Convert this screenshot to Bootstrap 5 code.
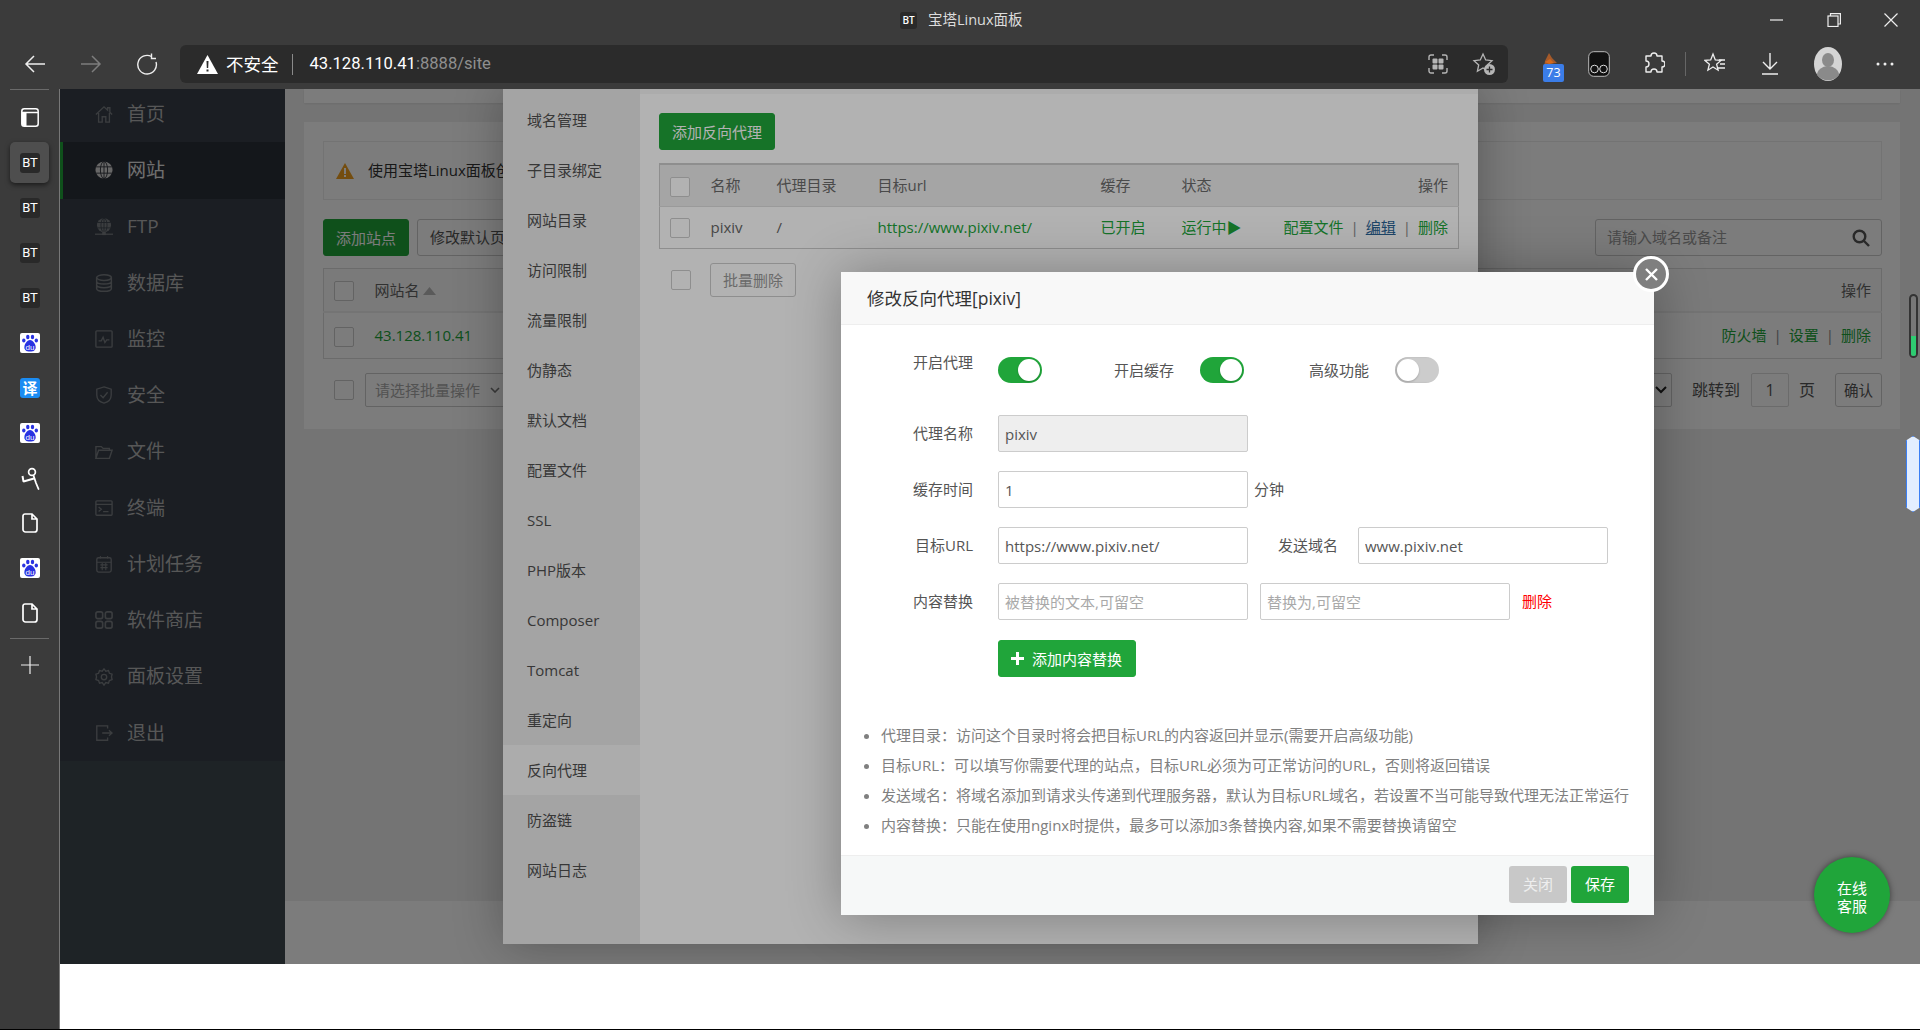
<!DOCTYPE html>
<html lang="zh-CN">
<head>
<meta charset="utf-8">
<title>宝塔Linux面板</title>
<link href="https://cdn.jsdelivr.net/npm/bootstrap@5.3.0/dist/css/bootstrap.min.css" rel="stylesheet">
<style>
html,body{height:100%;margin:0;overflow:hidden;background:#000;}
body{font-family:"Open Sans","Noto Sans CJK SC",sans-serif;font-size:15px;color:#555;}
.shell{height:1029px;display:flex;flex-direction:column;overflow:hidden;background:#3b3b3b;}
/* browser chrome */
.titlebar{height:45px;flex:none;color:#ddd;font-size:14.5px;padding-bottom:5px;}
.bt-mini{width:17px;height:17px;background:#2a2a2a;color:#fff;font-size:10px;font-weight:600;border-radius:3px;line-height:17px;text-align:center;}
.titlebar .center-title{padding-left:900px;gap:11px;flex:1;}
.winbtns{gap:43px;padding-right:22px;}
.toolbar{height:44px;flex:none;padding-left:24px;padding-bottom:6px;}
.navs{gap:34px;width:156px;}
.addr{width:1328px;height:38px;background:#2b2b2b;border-radius:6px;padding:0 12px 0 17px;font-size:17.5px;color:#fff;}
.addr .sep{width:1px;height:21px;background:#8a8a8a;margin:0 15px 0 13px;}
.addr .urltxt{font-family:Roboto,"Noto Sans CJK SC",sans-serif;font-size:16.6px;padding-left:2px;}
.addr .dim{color:#8f8f8f;}
.tools{flex:1;padding-left:34px;}
.ext-fire{position:relative;width:20px;height:32px;flex:none;}
.ext-badge{position:absolute;left:1px;bottom:-2px;width:21px;height:18px;background:#3b7de8;color:#fff;font-size:12.5px;line-height:18px;text-align:center;border-radius:2px;}
.t-glass{margin-left:26px;}
.t-puzzle{margin-left:33px;}
.vline{width:1px;height:24px;background:#666;margin-left:20px;}
.t-fav{margin-left:18px;}
.t-dl{margin-left:35px;}
.t-ava{margin-left:35px;}
.t-dots{margin-left:34px;}
.mainrow{flex:1;display:flex;min-height:0;}
/* rail */
.rail{width:59px;flex:none;background:#3b3b3b;}
.rail-top{height:1px;background:#6a6a6a;margin:0 10px 5px 10px;}
.rail-item{height:45px;width:59px;display:flex;align-items:center;justify-content:center;position:relative;padding-left:1px;}
.rail-on::before{content:"";position:absolute;left:10px;top:2px;width:39px;height:41px;background:#4e4e4e;border-radius:5px;box-shadow:0 2px 5px rgba(0,0,0,.55);}
.rail-bt{position:relative;width:20px;height:20px;background:#292929;border-radius:3px;color:#fff;font-family:Roboto,sans-serif;font-size:13px;line-height:20px;text-align:center;font-weight:400;}
.rail-fy{width:20px;height:20px;background:#1b8cf2;border-radius:3px;color:#fff;font-size:15px;line-height:20px;text-align:center;font-weight:700;}
.rail-sep{height:1px;background:#6a6a6a;margin:3px 10px 3px 10px;}
/* page */
.pageview{flex:1;min-width:0;border-left:1px solid #777;position:relative;background:#fff;display:flex;flex-direction:column;}
.appview{height:875px;flex:none;display:flex;overflow:hidden;}
.sidenav{width:225px;flex:none;background:#3e4a50;}
.sidenav-list{background:#383f49;margin-top:-3px;}
.nav-row{height:56.25px;display:flex;align-items:center;padding-left:35px;gap:14px;color:#b4b4b4;font-size:19px;}
.nav-row svg{width:18px;height:18px;flex:none;color:#7a7e83;}
.nav-row.active{background:#2c3038;border-left:3px solid #20a53a;padding-left:32px;color:#e6e6e6;}
.nav-row.active svg{color:#d4d4d4;}
.mainwrap{flex:1;min-width:0;display:flex;flex-direction:column;background:#fff;}
.mainarea{height:812px;flex:none;background:#f0f0f0;padding:0 20px 0 19px;overflow:hidden;}
.topcard{height:14px;background:#fff;margin-bottom:19px;box-shadow:0 1px 2px rgba(0,0,0,.08);}
.sitecard{height:307px;background:#fff;padding:19px 18px 0 19px;}
.notice{height:59px;border:1px solid #ececec;padding-left:12px;gap:14px;color:#333;white-space:nowrap;overflow:hidden;margin-bottom:19px;}
.btn-bt{background:#20a53a;border:1px solid #20a53a;color:#fff;font-size:15px;height:37px;padding:0 12px;border-radius:3px;line-height:36px;}
.btn-pale{background:#fff;border:1px solid #ccc;color:#555;font-size:15px;height:37px;padding:0 12px;border-radius:3px;line-height:35px;}
.searchbox{width:287px;height:37px;border:1px solid #ccc;border-radius:3px;padding:0 11px;color:#999;}
.cbx{display:inline-block;width:20px;height:20px;border:1px solid #ccc;border-radius:2px;background:#fff;vertical-align:middle;}
.site-tbl{width:100%;table-layout:fixed;border-collapse:collapse;border:1px solid #ddd;margin:12px 0 14px;color:#666;}
.site-tbl th{height:43px;background:#fbfbfb;border-bottom:2px solid #eee;font-weight:400;padding:0 10px;vertical-align:middle;}
.site-tbl td{height:47px;padding:0 10px;vertical-align:middle;}
.grn{color:#20a53a;}
.lnk-sep{color:#888;margin:0 7px;}
.pagerow{height:34px;color:#555;padding-left:11px;}
.sel-fake{height:34px;border:1px solid #ccc;border-radius:2px;color:#aaa;padding:0 9px;background:#fff;}
.sel-batch{width:145px;margin-left:11px;justify-content:space-between;white-space:nowrap;font-size:15px;}
.sel-size{width:90px;padding-right:4px;margin-left:auto;justify-content:flex-end;}
.pg-txt{font-size:16px;margin-left:20px;}
.pginput{width:38px;height:34px;border:1px solid #ddd;border-radius:2px;text-align:center;line-height:32px;color:#555;margin-left:11px;font-size:16px;}
.pg-unit{font-size:16px;margin-left:10px;margin-right:20px;}
.btn-pg{height:34px;width:47px;padding:0;justify-content:center;font-size:14.5px;}
.footbar{flex:1;background:#fff;}
/* layers */
.shade{position:absolute;left:0;top:0;right:0;height:875px;background:rgba(0,0,0,.3);overflow:hidden;}
.layer-site{position:absolute;left:443px;top:-1px;width:975px;height:856px;background:#f6f6f6;box-shadow:1px 1px 50px rgba(0,0,0,.3);display:flex;border-radius:0 0 2px 2px;}
.site-menu{width:137px;flex:none;background:#ebebeb;padding-top:7px;}
.site-menu-item{height:50px;line-height:50px;padding-left:24px;font-size:15px;color:#505050;}
.site-menu-item.active{background:#f6f6f6;}
.site-pane{flex:1;background:#fff;margin-top:6px;padding:19px 16px 0 19px;}
.btn-addrp{margin-bottom:13px;}
.proxy-tbl{width:800px;table-layout:fixed;border-collapse:collapse;border:1px solid #ccc;border-top:2px solid #ccc;color:#666;}
.proxy-tbl th{height:42px;background:#ececec;font-weight:400;padding:0 10px;border-bottom:1px solid #ddd;color:#6a6a6a;}
.proxy-tbl td{height:42px;padding:0 10px;}
.batch-row{margin-top:14px;padding-left:8px;}
.btn-off{height:34px;padding:0 12px;font-size:15px;border:1px solid #ccc;border-radius:3px;color:#999;line-height:32px;background:#fff;margin-left:19px;}
.dlg{position:absolute;left:781px;top:183px;width:813px;height:643px;background:#fff;box-shadow:1px 1px 50px rgba(0,0,0,.3);display:flex;flex-direction:column;}
.dlg-head{height:53px;flex:none;background:#f8f8f8;border-bottom:1px solid #eee;padding-left:26px;font-size:17.5px;line-height:52px;color:#333;}
.dlg-close{position:absolute;right:-15px;top:-16px;width:36px;height:36px;border-radius:50%;background:#7f7f7f;border:3px solid #fff;display:flex;align-items:center;justify-content:center;}
.dlg-body{flex:1;padding-top:32px;color:#555;}
.fm-row{display:flex;align-items:center;height:37px;margin-bottom:19px;}
.fm-row.fm-gap{margin-bottom:20px;}
.fm-lab{width:132px;text-align:right;margin-right:25px;flex:none;}
.fm-ctl{width:250px;height:37px;font-size:15px;border:1px solid #ccc;border-radius:2px;padding:0 6px;color:#555;font-family:inherit;box-shadow:none;flex:none;}
.fm-ctl::placeholder{color:#a9a9a9;}
.fm-ctl:disabled{background:#eee;}
.tgl{width:44px;height:26px;border-radius:13px;padding:2px;display:flex;flex:none;}
.tgl.on{background:#20a53a;justify-content:flex-end;}
.tgl.off{background:#ccc;box-shadow:inset 2px 0 2px rgba(0,0,0,.12);}
.tgl i{display:block;width:22px;height:22px;border-radius:50%;background:#fff;box-shadow:0 1px 2px rgba(0,0,0,.2);}
.tgl-row{height:26px;margin-bottom:32px;display:flex;align-items:center;}
.lab-a{margin:0 26px 0 72px;}
.lab-b{margin:0 26px 0 65px;}
.lab-c{width:90px;text-align:right;margin-right:20px;}
.fm-unit{margin-left:6px;}
.fm-del{margin-left:12px;color:#f00;}
.fm-second{margin-left:12px;}
.btn-addrule{width:138px;height:37px;}
.tips{margin:43px 0 0;padding-left:40px;color:#808080;font-size:15px;list-style:disc;}
.tips li{height:30px;line-height:30px;white-space:nowrap;}
.dlg-foot{height:60px;flex:none;background:#f6f8f8;border-top:1px solid #eee;padding:10px 25px 0 0;gap:4px;}
.btn-g{width:58px;height:37px;padding:0;font-size:15px;border:0;border-radius:3px;line-height:37px;text-align:center;}
.btn-close2{background:#c8c8c8;color:#eee;}
.btn-save{background:#20a53a;color:#fff;}
.chat-bub{position:absolute;left:1754px;top:768px;width:76px;height:76px;border-radius:50%;background:#20a53a;color:#fff;font-size:15px;line-height:18px;text-align:center;display:flex;align-items:center;justify-content:center;padding-top:3px;box-shadow:0 0 6px rgba(0,0,0,.5);}
.edge-gauge{position:absolute;right:2px;top:205px;width:9px;height:64px;border:2px solid #333;background:#777;border-radius:5px;overflow:hidden;}
.edge-gauge i{display:block;margin-top:40px;height:24px;background:#2ecc71;}
.edge-pill{position:absolute;right:0;top:347px;width:14px;height:76px;background:#e3eeff;border:1.5px solid #3b7ff5;clip-path:polygon(50% 0,100% 6%,100% 94%,50% 100%,0 94%,0 6%);}
.tri-sort{margin-left:3px;vertical-align:1px;}
</style>
</head>
<body>
<div class="shell">
  <div class="titlebar d-flex">
    <div class="center-title d-flex align-items-center"><span class="bt-mini">BT</span><span>宝塔Linux面板</span></div>
    <div class="winbtns d-flex align-items-center">
      <svg width="14" height="14" viewBox="0 0 14 14"><path d="M0 7h13" stroke="#eee" stroke-width="1.2"/></svg>
      <svg width="14" height="14" viewBox="0 0 14 14" fill="none" stroke="#eee" stroke-width="1.2"><rect x="1" y="3" width="10" height="10.5"/><path d="M3.5 3V.7H13.4V11H11"/></svg>
      <svg width="14" height="14" viewBox="0 0 14 14"><path d="M.5.5l13 13M13.500.5l-13 13" stroke="#eee" stroke-width="1.2"/></svg>
    </div>
  </div>
  <div class="toolbar d-flex align-items-center">
    <div class="navs d-flex align-items-center">
      <svg width="22" height="22" viewBox="0 0 22 22" fill="none" stroke="#eee" stroke-width="1.5"><path d="M21 11H2M10 3l-8 8 8 8"/></svg>
      <svg width="22" height="22" viewBox="0 0 22 22" fill="none" stroke="#7d7d7d" stroke-width="1.5"><path d="M1 11h19M12 3l8 8-8 8"/></svg>
      <svg width="22" height="22" viewBox="0 0 22 22" fill="none" stroke="#eee" stroke-width="1.4"><path d="M15.500 3.500A9.300 9.300 0 1 0 20 9"/><path d="M15.500.5v5h4.500"/></svg>
    </div>
    <div class="addr d-flex align-items-center">
      <svg width="21" height="19" viewBox="0 0 21 19" class="me-2"><path d="M10.500 0 21 19H0z" fill="#fff"/><path d="M9.500 6h2l-.3 7h-1.400zM9.500 14.500h2v2h-2z" fill="#2b2b2b"/></svg>
      <span>不安全</span><span class="sep"></span><span class="urltxt">43.128.110.41<span class="dim">:8888/site</span></span>
      <div class="ms-auto d-flex align-items-center gap-4">
        <svg width="20" height="20" viewBox="0 0 20 20" fill="none" stroke="#b5b5b5" stroke-width="1.4"><path d="M1 6V3a2 2 0 0 1 2-2h3M14 1h3a2 2 0 0 1 2 2v3M19 14v3a2 2 0 0 1-2 2h-3M6 19H3a2 2 0 0 1-2-2v-3"/><g fill="#b5b5b5" stroke="none"><rect x="4.500" y="4.500" width="5" height="5" rx="1"/><rect x="10.500" y="4.500" width="5" height="5" rx="1"/><rect x="4.500" y="10.500" width="5" height="5" rx="1"/><rect x="10.500" y="10.500" width="5" height="5" rx="1"/></g></svg>
        <svg width="24" height="24" viewBox="0 0 24 24" fill="none" stroke="#b5b5b5" stroke-width="1.3"><path d="M11 2l2.700 6 6.300.7-4.700 4.300 1.300 6.300L11 16l-5.600 3.300 1.300-6.300L2 8.700 8.300 8z"/><circle cx="17.500" cy="17.500" r="5.500" fill="#b5b5b5" stroke="none"/><path d="M17.500 14.500v6M14.500 17.500h6" stroke="#2b2b2b"/></svg>
      </div>
    </div>
    <div class="tools d-flex align-items-center">
      <div class="ext-fire"><svg width="20" height="20" viewBox="0 0 20 20"><path d="M7 2l3 5 5 5-11 1-2 3 1-6z" fill="#a55a2a"/><path d="M3 11l5-3 4 4-5 1z" fill="#d2691e"/></svg><span class="ext-badge">73</span></div>
      <svg class="t-glass" width="22" height="26" viewBox="0 0 22 26"><rect x=".7" y=".7" width="20.600" height="24.600" rx="5" fill="#111" stroke="#bbb"/><circle cx="6.500" cy="18" r="3.800" fill="none" stroke="#ddd"/><circle cx="15.500" cy="18" r="3.800" fill="none" stroke="#ddd"/></svg>
      <svg class="t-puzzle" width="22" height="24" viewBox="0 0 22 24" fill="none" stroke="#eee" stroke-width="1.4"><path d="M8 4a3 3 0 0 1 6 0h5v5a3 3 0 0 1 0 6v5h-5a3 3 0 0 0-6 0H3v-5a3 3 0 0 0 0-6V4z" stroke-linejoin="round"/></svg>
      <span class="vline"></span>
      <svg class="t-fav" width="22" height="24" viewBox="0 0 22 24" fill="none" stroke="#eee" stroke-width="1.3"><path d="M9 2l2.300 6 5.700.4-4.400 3.800 1.500 6L9 15l-5.100 3.200 1.500-6L1 8.400 6.700 8z"/><path d="M15 8h6M16 12h5M14 16h7"/></svg>
      <svg class="t-dl" width="18" height="24" viewBox="0 0 18 24" fill="none" stroke="#eee" stroke-width="1.4"><path d="M9 1v15M2 10l7 7 7-7M1 22h16"/></svg>
      <svg class="t-ava" width="28" height="34" viewBox="0 0 28 34"><ellipse cx="14" cy="17" rx="14" ry="17" fill="#d4d4d4"/><ellipse cx="14" cy="13" rx="6" ry="7" fill="#8a8a8a"/><path d="M3 28a11 9 0 0 1 22 0 14 14 0 0 1-22 0z" fill="#8a8a8a"/></svg>
      <svg class="t-dots" width="18" height="4" viewBox="0 0 18 4" fill="#eee"><circle cx="2" cy="2" r="1.500"/><circle cx="9" cy="2" r="1.500"/><circle cx="16" cy="2" r="1.500"/></svg>
    </div>
  </div>
  <div class="mainrow">
    <div class="rail">
      <div class="rail-top"></div>
      <div class="rail-item"><svg width="18" height="19" viewBox="0 0 18 19" fill="none" stroke="#fff" stroke-width="1.500"><rect x=".8" y=".8" width="16.400" height="17.400" rx="2.500"/><path d="M1 4.500h16"/><path d="M1 5h4.500v13H3a2 2 0 0 1-2-2z" fill="#fff" stroke="none"/></svg></div>
      <div class="rail-item rail-on"><span class="rail-bt">BT</span></div>
      <div class="rail-item"><span class="rail-bt">BT</span></div>
      <div class="rail-item"><span class="rail-bt">BT</span></div>
      <div class="rail-item"><span class="rail-bt">BT</span></div>
      <div class="rail-item"><svg width="20" height="20" viewBox="0 0 20 20"><rect width="20" height="20" rx="2" fill="#fff"/><g fill="#2932e1"><ellipse cx="3.800" cy="7.500" rx="1.700" ry="2.100"/><ellipse cx="7.800" cy="4" rx="1.700" ry="2.200"/><ellipse cx="12.500" cy="4" rx="1.700" ry="2.200"/><ellipse cx="16.300" cy="7.500" rx="1.700" ry="2.100"/><path d="M10 7c3 0 6.500 5 5.500 8.500-1 3-3.500 3-5.500 3s-4.500 0-5.500-3C3.500 12 7 7 10 7z"/></g><text x="10" y="16.500" font-size="8" fill="#fff" text-anchor="middle" font-family="Liberation Sans">du</text></svg></div>
      <div class="rail-item"><span class="rail-fy">译</span></div>
      <div class="rail-item"><svg width="20" height="20" viewBox="0 0 20 20"><rect width="20" height="20" rx="2" fill="#fff"/><g fill="#2932e1"><ellipse cx="3.800" cy="7.500" rx="1.700" ry="2.100"/><ellipse cx="7.800" cy="4" rx="1.700" ry="2.200"/><ellipse cx="12.500" cy="4" rx="1.700" ry="2.200"/><ellipse cx="16.300" cy="7.500" rx="1.700" ry="2.100"/><path d="M10 7c3 0 6.500 5 5.500 8.500-1 3-3.500 3-5.500 3s-4.500 0-5.500-3C3.500 12 7 7 10 7z"/></g><text x="10" y="16.500" font-size="8" fill="#fff" text-anchor="middle" font-family="Liberation Sans">du</text></svg></div>
      <div class="rail-item"><svg width="20" height="24" viewBox="0 0 20 24" fill="none" stroke="#fff"><circle cx="12" cy="6" r="3.400" stroke-width="1.700"/><path d="M2.500 10L3.500 15.500 14 12.500" stroke-width="2" stroke-linejoin="bevel"/><path d="M13.500 9.500L16 17l2.500 6" stroke-width="1.800" stroke-linecap="round"/></svg></div>
      <div class="rail-item"><svg width="16" height="20" viewBox="0 0 16 20" fill="none" stroke="#fff" stroke-width="1.700"><path d="M3 1h7l5 5v10.500a2.500 2.500 0 0 1-2.500 2.500h-9A2.500 2.500 0 0 1 1 16.500V3a2 2 0 0 1 2-2zM10 1v5h5"/></svg></div>
      <div class="rail-item"><svg width="20" height="20" viewBox="0 0 20 20"><rect width="20" height="20" rx="2" fill="#fff"/><g fill="#2932e1"><ellipse cx="3.800" cy="7.500" rx="1.700" ry="2.100"/><ellipse cx="7.800" cy="4" rx="1.700" ry="2.200"/><ellipse cx="12.500" cy="4" rx="1.700" ry="2.200"/><ellipse cx="16.300" cy="7.500" rx="1.700" ry="2.100"/><path d="M10 7c3 0 6.500 5 5.500 8.500-1 3-3.500 3-5.500 3s-4.500 0-5.500-3C3.500 12 7 7 10 7z"/></g><text x="10" y="16.500" font-size="8" fill="#fff" text-anchor="middle" font-family="Liberation Sans">du</text></svg></div>
      <div class="rail-item"><svg width="16" height="20" viewBox="0 0 16 20" fill="none" stroke="#fff" stroke-width="1.700"><path d="M3 1h7l5 5v10.500a2.500 2.500 0 0 1-2.500 2.500h-9A2.500 2.500 0 0 1 1 16.500V3a2 2 0 0 1 2-2zM10 1v5h5"/></svg></div>
      <div class="rail-sep"></div>
      <div class="rail-item"><svg width="18" height="18" viewBox="0 0 18 18" stroke="#eee" stroke-width="1.200"><path d="M9 0v18M0 9h18"/></svg></div>
    </div>
    <div class="pageview">
      <div class="appview">
        <div class="sidenav">
          <div class="sidenav-list">
            <div class="nav-row"><svg viewBox="0 0 20 20" fill="none" stroke="currentColor" stroke-width="1.500"><path d="M1 10.500L10 2l4 3.700V3h2.500v5L19 10.500M4 9v10h4v-6h4v6h4V9"/></svg><span>首页</span></div>
            <div class="nav-row active"><svg viewBox="0 0 20 20"><circle cx="10" cy="10" r="9.500" fill="currentColor"/><g fill="none" stroke="#2c3038" stroke-width="1"><ellipse cx="10" cy="10" rx="4" ry="9.500"/><path d="M10 .5v19M1 6.500h18M1 13.500h18"/></g></svg><span>网站</span></div>
            <div class="nav-row"><svg viewBox="0 0 20 20"><circle cx="10" cy="8" r="7.800" fill="currentColor"/><g fill="none" stroke="#383f49" stroke-width=".9"><ellipse cx="10" cy="8" rx="3.400" ry="7.800"/><path d="M10 .2v15.600M2.500 5h15M2.500 11h15"/></g><path d="M0 18h20" stroke="currentColor" stroke-width="1.400"/><rect x="8" y="15" width="4" height="4" fill="currentColor"/></svg><span>FTP</span></div>
            <div class="nav-row"><svg viewBox="0 0 20 20" fill="none" stroke="currentColor" stroke-width="1.600"><ellipse cx="10" cy="4" rx="8.200" ry="3.200"/><path d="M1.800 4v12c0 2 3.700 3.200 8.200 3.200s8.200-1.200 8.200-3.200V4M1.800 8c0 2 3.700 3.200 8.200 3.200S18.200 10 18.200 8M1.800 12c0 2 3.700 3.200 8.200 3.200s8.200-1.200 8.200-3.200"/></svg><span>数据库</span></div>
            <div class="nav-row"><svg viewBox="0 0 20 20" fill="none" stroke="currentColor" stroke-width="1.500"><rect x="1" y="1" width="18" height="18" rx="1"/><path d="M4 12h3l2-4 2 6 2-3h3"/></svg><span>监控</span></div>
            <div class="nav-row"><svg viewBox="0 0 20 20" fill="none" stroke="currentColor" stroke-width="1.500"><path d="M10 1l8 2.500V10c0 5-4 8-8 9-4-1-8-4-8-9V3.500zM6 10l3 3 5-6"/></svg><span>安全</span></div>
            <div class="nav-row"><svg viewBox="0 0 20 20" fill="none" stroke="currentColor" stroke-width="1.500"><path d="M1 17V4h6l2 2h7v2M1 17l3-9h15l-3 9z"/></svg><span>文件</span></div>
            <div class="nav-row"><svg viewBox="0 0 20 20" fill="none" stroke="currentColor" stroke-width="1.500"><rect x="1" y="2" width="18" height="16" rx="1"/><path d="M1 6h18M4 9l3 2.500L4 14M9 14h6"/></svg><span>终端</span></div>
            <div class="nav-row"><svg viewBox="0 0 20 20" fill="none" stroke="currentColor" stroke-width="1.500"><rect x="2" y="3" width="16" height="16" rx="2"/><path d="M6 1v3M14 1v3M2 8h16M6 11h8M6 14h8M8 9v8M12 9v8" stroke-width="1.200"/></svg><span>计划任务</span></div>
            <div class="nav-row"><svg viewBox="0 0 20 20" fill="none" stroke="currentColor" stroke-width="1.800"><rect x="1" y="1" width="7.500" height="7.500" rx="2"/><rect x="11.500" y="1" width="7.500" height="7.500" rx="2"/><rect x="1" y="11.500" width="7.500" height="7.500" rx="2"/><rect x="11.500" y="11.500" width="7.500" height="7.500" rx="2"/></svg><span>软件商店</span></div>
            <div class="nav-row"><svg viewBox="0 0 20 20" fill="none" stroke="currentColor" stroke-width="1.500"><circle cx="10" cy="10" r="3"/><path d="M10 1l2 2.500 3-.6 1 3 3 1-.7 3 .7 3-3 1-1 3-3-.7L10 19l-2-2.800-3 .7-1-3-3-1 .7-3-.7-3 3-1 1-3 3 .6z"/></svg><span>面板设置</span></div>
            <div class="nav-row"><svg viewBox="0 0 20 20" fill="none" stroke="currentColor" stroke-width="1.500"><path d="M14 5V2H2v16h12v-3M8 10h11M15.500 7l3.500 3-3.500 3"/></svg><span>退出</span></div>
          </div>
        </div>
        <div class="mainwrap">
          <div class="mainarea">
            <div class="topcard"></div>
            <div class="sitecard">
              <div class="notice d-flex align-items-center"><svg width="18" height="16" viewBox="0 0 18 16"><path d="M9 0l9 16H0z" fill="#f0a020"/><path d="M8 5h2v6H8zM8 12h2v2H8z" fill="#fff"/></svg><span>使用宝塔Linux面板创</span></div>
              <div class="d-flex align-items-center">
                <span class="btn-bt">添加站点</span>
                <span class="btn-pale ms-2">修改默认页</span>
                <div class="searchbox ms-auto d-flex align-items-center justify-content-between"><span>请输入域名或备注</span><svg width="18" height="18" viewBox="0 0 18 18" fill="none" stroke="#555" stroke-width="2.400"><circle cx="7.500" cy="7.500" r="5.800"/><path d="M12 12l5 5"/></svg></div>
              </div>
              <table class="site-tbl">
                <colgroup><col style="width:41px"><col style="width:200px"><col><col style="width:200px"></colgroup>
                <thead><tr><th><span class="cbx"></span></th><th>网站名<svg class="tri-sort" width="13" height="8" viewBox="0 0 13 8"><path d="M6.500 0L13 8H0z" fill="#bbb"/></svg></th><th></th><th class="text-end">操作</th></tr></thead>
                <tbody><tr><td><span class="cbx"></span></td><td class="grn">43.128.110.41</td><td></td><td class="text-end"><span class="grn">防火墙</span><span class="lnk-sep">|</span><span class="grn">设置</span><span class="lnk-sep">|</span><span class="grn">删除</span></td></tr></tbody>
              </table>
              <div class="pagerow d-flex align-items-center">
                <span class="cbx"></span>
                <span class="sel-fake sel-batch d-flex align-items-center"><span>请选择批量操作</span><svg width="10" height="6" viewBox="0 0 10 6" fill="none" stroke="#777" stroke-width="1.600"><path d="M1 1l4 4 4-4"/></svg></span>
                <span class="sel-fake sel-size d-flex align-items-center"><svg width="12" height="8" viewBox="0 0 12 8" fill="none" stroke="#222" stroke-width="2"><path d="M1 1l5 5 5-5"/></svg></span>
                <span class="pg-txt">跳转到</span><span class="pginput">1</span><span class="pg-unit">页</span><span class="btn-pale btn-pg d-flex align-items-center">确认</span>
              </div>
            </div>
          </div>
          <div class="footbar"></div>
        </div>
      </div>
      <div class="shade">
        <div class="layer-site">
          <div class="site-menu">
            <div class="site-menu-item">域名管理</div>
            <div class="site-menu-item">子目录绑定</div>
            <div class="site-menu-item">网站目录</div>
            <div class="site-menu-item">访问限制</div>
            <div class="site-menu-item">流量限制</div>
            <div class="site-menu-item">伪静态</div>
            <div class="site-menu-item">默认文档</div>
            <div class="site-menu-item">配置文件</div>
            <div class="site-menu-item">SSL</div>
            <div class="site-menu-item">PHP版本</div>
            <div class="site-menu-item">Composer</div>
            <div class="site-menu-item">Tomcat</div>
            <div class="site-menu-item">重定向</div>
            <div class="site-menu-item active">反向代理</div>
            <div class="site-menu-item">防盗链</div>
            <div class="site-menu-item">网站日志</div>
          </div>
          <div class="site-pane">
            <div class="btn-addrp"><span class="btn-bt d-inline-block">添加反向代理</span></div>
            <table class="proxy-tbl">
              <colgroup><col style="width:41px"><col style="width:66px"><col style="width:101px"><col style="width:223px"><col style="width:81px"><col style="width:100px"><col></colgroup>
              <thead><tr><th><span class="cbx"></span></th><th>名称</th><th>代理目录</th><th>目标url</th><th>缓存</th><th>状态</th><th class="text-end">操作</th></tr></thead>
              <tbody><tr><td><span class="cbx"></span></td><td>pixiv</td><td>/</td><td class="grn">https://www.pixiv.net/</td><td class="grn">已开启</td><td class="grn">运行中▶</td><td class="text-end text-nowrap"><span class="grn">配置文件</span><span class="lnk-sep">|</span><span class="text-decoration-underline" style="color:#2a6496">编辑</span><span class="lnk-sep">|</span><span class="grn">删除</span></td></tr></tbody>
            </table>
            <div class="batch-row d-flex align-items-center"><span class="cbx ms-1"></span><span class="btn-off">批量删除</span></div>
          </div>
        </div>
      </div>
      <div class="shade">
        <div class="dlg">
          <div class="dlg-head">修改反向代理[pixiv]</div>
          <div class="dlg-close"><svg width="15" height="15" viewBox="0 0 15 15"><path d="M2 2l11 11M13 2L2 13" stroke="#fff" stroke-width="2.400"/></svg></div>
          <div class="dlg-body">
            <div class="tgl-row">
              <span class="fm-lab mb-3">开启代理</span>
              <span class="tgl on"><i></i></span>
              <span class="lab-a">开启缓存</span>
              <span class="tgl on"><i></i></span>
              <span class="lab-b">高级功能</span>
              <span class="tgl off"><i></i></span>
            </div>
            <div class="fm-row"><span class="fm-lab">代理名称</span><input class="form-control fm-ctl" disabled value="pixiv"></div>
            <div class="fm-row"><span class="fm-lab">缓存时间</span><input class="form-control fm-ctl" value="1"><span class="fm-unit">分钟</span></div>
            <div class="fm-row"><span class="fm-lab">目标URL</span><input class="form-control fm-ctl" value="https://www.pixiv.net/"><span class="lab-c">发送域名</span><input class="form-control fm-ctl" value="www.pixiv.net"></div>
            <div class="fm-row fm-gap"><span class="fm-lab">内容替换</span><input class="form-control fm-ctl" placeholder="被替换的文本,可留空"><input class="form-control fm-ctl fm-second" placeholder="替换为,可留空"><span class="fm-del">删除</span></div>
            <div class="fm-row mb-0"><span class="fm-lab"></span><span class="btn-bt btn-addrule d-flex align-items-center gap-2"><svg width="13" height="13" viewBox="0 0 13 13"><path d="M5 0h3v5h5v3H8v5H5V8H0V5h5z" fill="#fff"/></svg>添加内容替换</span></div>
            <ul class="tips">
              <li>代理目录：访问这个目录时将会把目标URL的内容返回并显示(需要开启高级功能)</li>
              <li>目标URL：可以填写你需要代理的站点，目标URL必须为可正常访问的URL，否则将返回错误</li>
              <li>发送域名：将域名添加到请求头传递到代理服务器，默认为目标URL域名，若设置不当可能导致代理无法正常运行</li>
              <li>内容替换：只能在使用nginx时提供，最多可以添加3条替换内容,如果不需要替换请留空</li>
            </ul>
          </div>
          <div class="dlg-foot d-flex justify-content-end"><span class="btn-g btn-close2">关闭</span><span class="btn-g btn-save">保存</span></div>
        </div>
      </div>
      <div class="chat-bub">在线<br>客服</div>
      <div class="edge-gauge"><i></i></div>
      <div class="edge-pill"></div>
    </div>
  </div>
</div>
<script src="https://cdn.jsdelivr.net/npm/bootstrap@5.3.0/dist/js/bootstrap.bundle.min.js"></script>
</body>
</html>
